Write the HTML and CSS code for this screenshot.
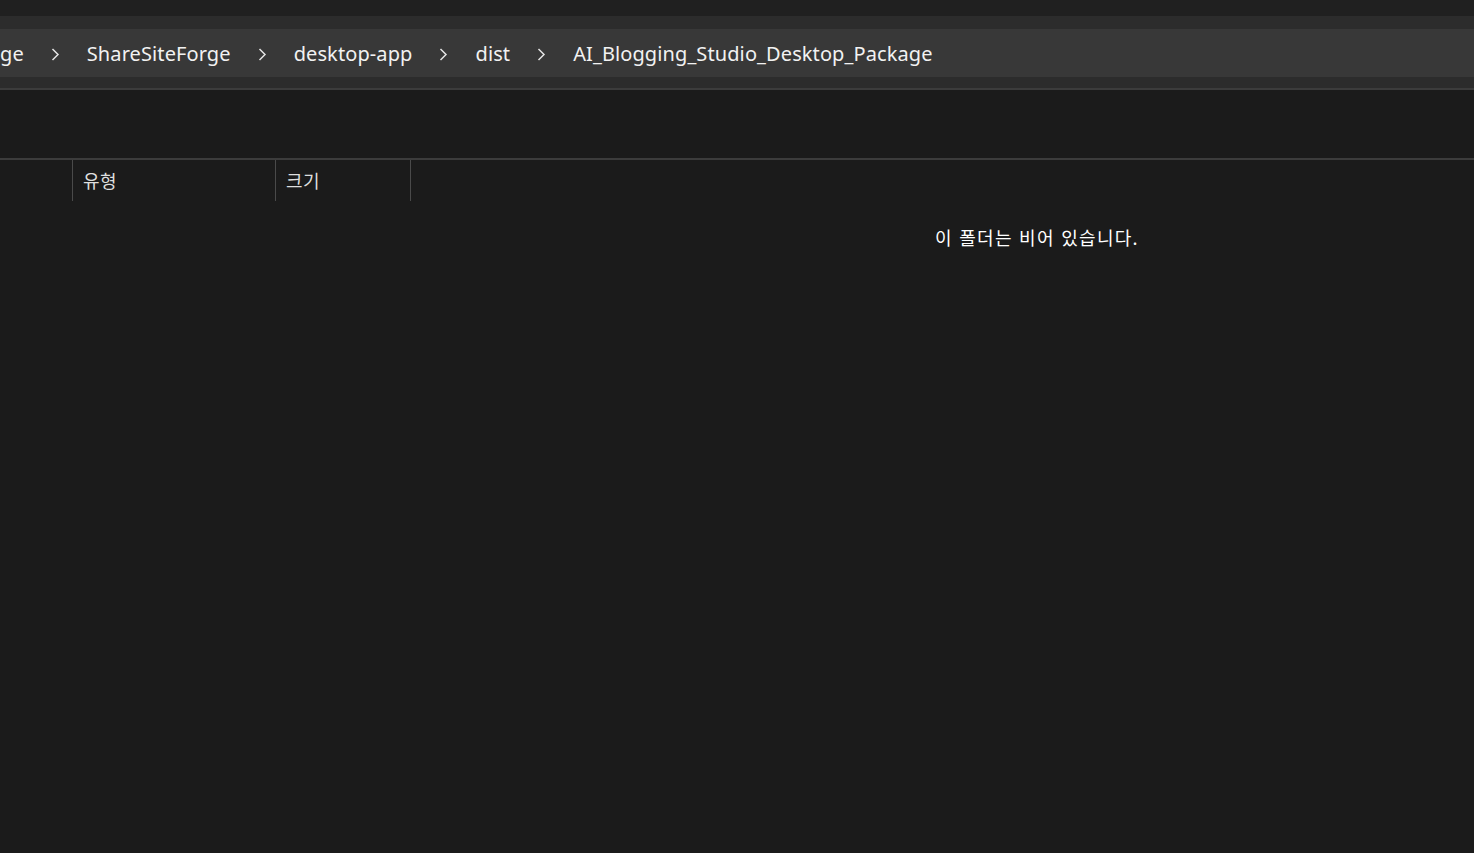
FILE: index.html
```html
<!DOCTYPE html>
<html lang="ko">
<head>
<meta charset="utf-8">
<link rel="stylesheet" href="styles.css">
</head>
<body>
<div class="window">
  <div class="topband"></div>
  <div class="navbar">
    <div class="address">
      <span class="crumb first">ge</span>
      <span class="chev"><svg width="9" height="13" viewBox="0 0 9 13"><path d="M1.5 1 L7 6.5 L1.5 12" fill="none" stroke="#e4e4e4" stroke-width="1.5"/></svg></span>
      <span class="crumb">ShareSiteForge</span>
      <span class="chev"><svg width="9" height="13" viewBox="0 0 9 13"><path d="M1.5 1 L7 6.5 L1.5 12" fill="none" stroke="#e4e4e4" stroke-width="1.5"/></svg></span>
      <span class="crumb">desktop-app</span>
      <span class="chev"><svg width="9" height="13" viewBox="0 0 9 13"><path d="M1.5 1 L7 6.5 L1.5 12" fill="none" stroke="#e4e4e4" stroke-width="1.5"/></svg></span>
      <span class="crumb">dist</span>
      <span class="chev"><svg width="9" height="13" viewBox="0 0 9 13"><path d="M1.5 1 L7 6.5 L1.5 12" fill="none" stroke="#e4e4e4" stroke-width="1.5"/></svg></span>
      <span class="crumb">AI_Blogging_Studio_Desktop_Package</span>
    </div>
  </div>
  <div class="toolbar"></div>
  <div class="content">
    <div class="headers">
      <div class="col col-name"></div>
      <div class="col col-type">유형</div>
      <div class="col col-size">크기</div>
    </div>
    <div class="empty">이 폴더는 비어 있습니다.</div>
  </div>
</div>
</body>
</html>
```
FILE: styles.css
```css
html, body {
  margin: 0;
  padding: 0;
  background: #1b1b1b;
}
.window {
  width: 1474px;
  height: 853px;
  display: flex;
  flex-direction: column;
  overflow: hidden;
  font-family: "Noto Sans", "Noto Sans CJK KR", sans-serif;
  color: #ffffff;
}
.topband {
  height: 16px;
  background: #202020;
  flex: none;
}
.navbar {
  background: #2c2c2c;
  padding-top: 13px;
  box-sizing: border-box;
  border-bottom: 2px solid #3c3c3c;
  height: 74px;
  flex: none;
}
.address {
  height: 48px;
  background: #383838;
  display: flex;
  align-items: center;
  font-size: 20px;
  letter-spacing: 0.1px;
  color: #f2f2f2;
  white-space: nowrap;
}
.crumb {
  line-height: 48px;
  padding-top: 2px;
}
.chev {
  width: 63px;
  display: flex;
  justify-content: center;
  align-items: center;
  padding-top: 2px;
}
.toolbar {
  height: 70px;
  background: #1b1b1b;
  border-bottom: 2px solid #3c3c3c;
  box-sizing: border-box;
  flex: none;
}
.content {
  flex: 1;
  background: #1b1b1b;
  display: flex;
  flex-direction: column;
}
.headers {
  display: flex;
  height: 41px;
}
.col {
  font-family: "Noto Sans CJK KR", sans-serif;
  font-size: 18px;
  letter-spacing: 0.5px;
  color: #dedede;
  line-height: 41px;
  padding-left: 10px;
  box-sizing: border-box;
}
.col-name { width: 73px; border-right: 1px solid #4a4a4a; padding: 0; }
.col-type { width: 203px; border-right: 1px solid #4a4a4a; }
.col-size { width: 135px; border-right: 1px solid #4a4a4a; }
.empty {
  font-family: "Noto Sans CJK KR", sans-serif;
  font-size: 18px;
  letter-spacing: 1.3px;
  color: #ffffff;
  margin-top: 24px;
  padding-left: 935px;
  line-height: 24px;
}
```
